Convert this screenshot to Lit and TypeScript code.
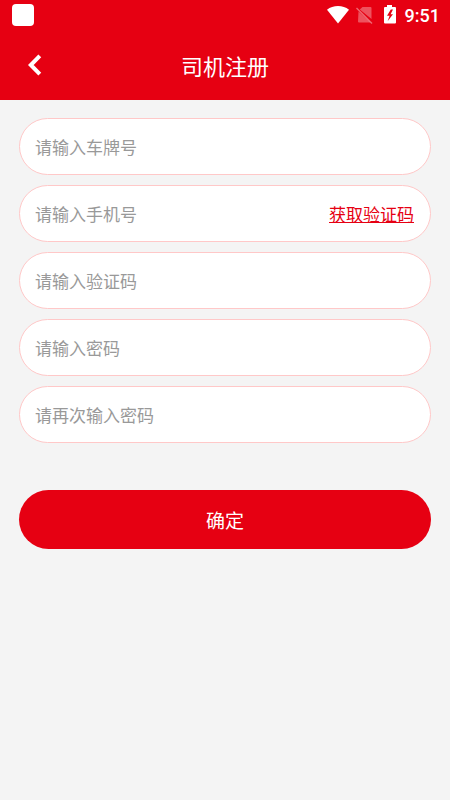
import { LitElement, html, css, svg, nothing } from "lit";
import { customElement, property } from "lit/decorators.js";

@customElement("status-bar")
class StatusBar extends LitElement {
  static styles = css`
    :host {
      display: flex;
      align-items: center;
      justify-content: space-between;
      height: 30px;
      padding: 0 10px 0 12px;
      color: #fff;
    }
    .app {
      width: 22px;
      height: 22px;
      border-radius: 4px;
      background: #fff;
    }
    .tray {
      display: flex;
      align-items: center;
    }
    .icons {
      display: block;
      width: 72px;
      height: 30px;
      margin-right: 6px;
    }
    .time {
      padding-top: 2px;
      font: 500 18px/28px Roboto, sans-serif;
    }
  `;

  render() {
    return html`
      <span class="app"></span>
      <div class="tray">
        <svg class="icons" viewBox="0 0 72 30" aria-hidden="true">
          ${svg`
            <path d="M0 9.8 C6 4.8 16 4.8 22 9.8 L11 23.5 Z" fill="#fff" />
            <path d="M35.5 7 H43.5 Q44.5 7 44.5 8 V19 L32.8 9.6 Z M31.5 11.5 L43.5 22.5 H32 Q31 22.5 31 21.5 Z" fill="#fff" opacity="0.32" />
            <path d="M29.5 8 L45 23.4" stroke="#fff" stroke-width="1.4" opacity="0.4" />
            <path d="M60 5 H65 V7 H68 Q69 7 69 8 V22.5 Q69 23.5 68 23.5 H58 Q57 23.5 57 22.5 V8 Q57 7 58 7 H60 Z" fill="#fff" />
            <path d="M63.8 9.5 L60 15.8 H62.6 L60.6 21.3 L66 14.2 H63.6 L66 9.5 Z" fill="#e60012" />
          `}
        </svg>
        <span class="time">9:51</span>
      </div>
    `;
  }
}

@customElement("form-field")
class FormField extends LitElement {
  @property() label = "";
  @property() type = "text";
  @property() action = "";

  static styles = css`
    :host {
      display: block;
    }
    .box {
      display: flex;
      align-items: center;
      box-sizing: border-box;
      height: 57px;
      padding: 0 16px 0 15px;
      border: 1px solid #ffc8c8;
      border-radius: 29px;
      background: #fff;
    }
    .input,
    .action {
      font: 17px/24px "Noto Sans CJK SC", sans-serif;
      padding: 0;
      border: 0;
      background: none;
    }
    .input {
      flex: 1;
      min-width: 0;
      outline: 0;
      color: #333;
    }
    .input::placeholder {
      color: #999;
      opacity: 1;
    }
    .action {
      color: #e60012;
      text-decoration: underline;
      cursor: pointer;
    }
  `;

  render() {
    return html`
      <div class="box">
        <input class="input" type=${this.type} placeholder=${this.label} aria-label=${this.label} />
        ${this.action ? html`<a class="action" href="#">${this.action}</a>` : nothing}
      </div>
    `;
  }
}

@customElement("app-root")
class AppRoot extends LitElement {
  static styles = css`
    :host {
      display: block;
      min-height: 100vh;
      background: #f4f4f4;
      font-family: "Noto Sans CJK SC", sans-serif;
    }
    .top {
      background: #e60012;
      color: #fff;
    }
    .nav {
      display: grid;
      grid-template-columns: 70px 1fr 70px;
      align-items: center;
      height: 70px;
    }
    .back {
      display: flex;
      align-items: center;
      justify-content: center;
      height: 70px;
      padding: 0;
      border: 0;
      background: none;
      color: #fff;
      cursor: pointer;
    }
    .chevron {
      display: block;
      width: 16px;
      height: 24px;
    }
    .title {
      margin: 0;
      text-align: center;
      font-size: 22px;
      line-height: 30px;
      font-weight: 400;
    }
    .form {
      display: flex;
      flex-direction: column;
      gap: 10px;
      padding: 18px 19px;
    }
    .submit {
      height: 59px;
      margin-top: 37px;
      padding: 0;
      border: 0;
      border-radius: 30px;
      background: #e60012;
      color: #fff;
      font: 19px/28px "Noto Sans CJK SC", sans-serif;
      cursor: pointer;
    }
  `;

  render() {
    return html`
      <header class="top">
        <status-bar></status-bar>
        <nav class="nav">
          <button class="back" type="button" aria-label="返回">
            <svg class="chevron" viewBox="0 0 16 24" aria-hidden="true">
              <path d="M12.8 2.8 L3.8 12 L12.8 21.2" fill="none" stroke="currentColor" stroke-width="4" />
            </svg>
          </button>
          <h1 class="title">司机注册</h1>
        </nav>
      </header>
      <form class="form">
        <form-field label="请输入车牌号"></form-field>
        <form-field label="请输入手机号" type="tel" action="获取验证码"></form-field>
        <form-field label="请输入验证码"></form-field>
        <form-field label="请输入密码" type="password"></form-field>
        <form-field label="请再次输入密码" type="password"></form-field>
        <button class="submit" type="button">确定</button>
      </form>
    `;
  }
}
